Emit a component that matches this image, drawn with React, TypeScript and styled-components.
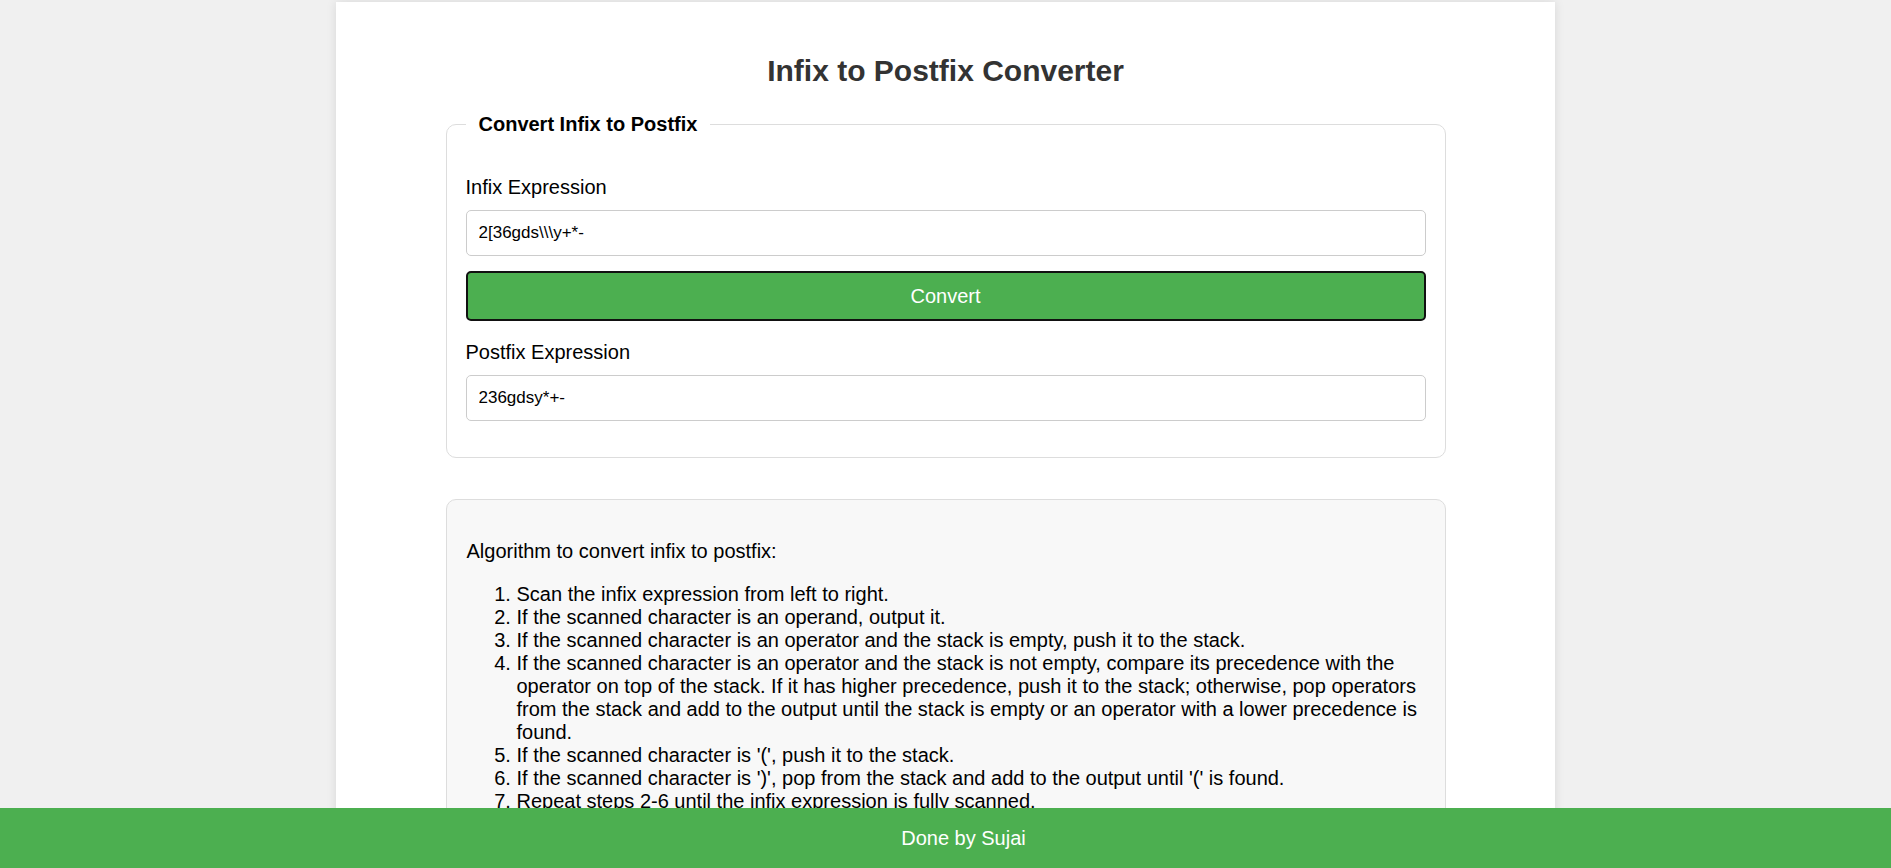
import React from "react";
import styled, { createGlobalStyle } from "styled-components";

const GlobalStyle = createGlobalStyle`
  html {
    scrollbar-width: none;
  }
  html::-webkit-scrollbar {
    display: none;
  }
  body {
    margin: 0;
    background: #f0f0f0;
    font-family: "Liberation Sans", Arial, sans-serif;
    color: #000;
  }
  * {
    box-sizing: border-box;
  }
`;

const Page = styled.div`
  width: 1219px;
  margin: 2px auto 0;
  padding: 20px 0 120px;
  background: #fff;
  box-shadow: 0 0 10px rgba(0, 0, 0, 0.1);
  min-height: 100vh;
`;

const Title = styled.h1`
  margin: 32px 0 25px;
  font-size: 30px;
  line-height: 34px;
  font-weight: bold;
  color: #333;
  text-align: center;
`;

const Card = styled.fieldset`
  width: 1000px;
  margin: 0 auto;
  padding: 20px 19px 36px;
  border: 1px solid #ddd;
  border-radius: 10px;
`;

const Legend = styled.legend`
  padding: 0 13px;
  font-size: 20px;
  line-height: 23px;
  font-weight: bold;
`;

const Label = styled.label`
  display: block;
  margin: 20px 0 11px;
  font-size: 20px;
  line-height: 23px;
`;

const TextInput = styled.input`
  display: block;
  width: 100%;
  height: 46px;
  padding: 0 12px;
  border: 1px solid #ccc;
  border-radius: 5px;
  font-family: "Liberation Sans", Arial, sans-serif;
  font-size: 17px;
  color: #000;
  background: #fff;
  outline: none;
`;

const ConvertButton = styled.button`
  display: block;
  width: 100%;
  height: 50px;
  margin-top: 15px;
  border: 2px solid #111;
  border-radius: 5px;
  background: #4caf50;
  color: #fff;
  font-family: "Liberation Sans", Arial, sans-serif;
  font-size: 20px;
  cursor: pointer;
`;

const InfoBox = styled.div`
  width: 1000px;
  margin: 41px auto 0;
  padding: 20px;
  background: #f8f8f8;
  border: 1px solid #ddd;
  border-radius: 10px;
  font-size: 20px;
  line-height: 23px;
`;

const Intro = styled.p`
  margin: 20px 0;
`;

const Steps = styled.ol`
  margin: 20px 0;
  padding-left: 50px;
`;

const Footer = styled.footer`
  position: fixed;
  left: 0;
  right: 0;
  bottom: 0;
  height: 60px;
  padding-left: 36px;
  background: #4caf50;
  color: #fff;
  font-size: 20px;
  line-height: 60px;
  text-align: center;
`;

const steps = [
  "Scan the infix expression from left to right.",
  "If the scanned character is an operand, output it.",
  "If the scanned character is an operator and the stack is empty, push it to the stack.",
  "If the scanned character is an operator and the stack is not empty, compare its precedence with the operator on top of the stack. If it has higher precedence, push it to the stack; otherwise, pop operators from the stack and add to the output until the stack is empty or an operator with a lower precedence is found.",
  "If the scanned character is '(', push it to the stack.",
  "If the scanned character is ')', pop from the stack and add to the output until '(' is found.",
  "Repeat steps 2-6 until the infix expression is fully scanned.",
  "Pop and output all remaining operators from the stack.",
];

export default function App() {
  const [infix, setInfix] = React.useState("2[36gds\\\\\\y+*-");
  const [postfix, setPostfix] = React.useState("236gdsy*+-");

  return (
    <>
      <GlobalStyle />
      <Page>
        <Title>Infix to Postfix Converter</Title>
        <Card>
          <Legend>Convert Infix to Postfix</Legend>
          <Label htmlFor="infix">Infix Expression</Label>
          <TextInput
            id="infix"
            value={infix}
            onChange={(e) => setInfix(e.target.value)}
          />
          <ConvertButton type="button" onClick={() => setPostfix(postfix)}>
            Convert
          </ConvertButton>
          <Label htmlFor="postfix">Postfix Expression</Label>
          <TextInput id="postfix" value={postfix} readOnly />
        </Card>
        <InfoBox>
          <Intro>Algorithm to convert infix to postfix:</Intro>
          <Steps>
            {steps.map((s) => (
              <li key={s}>{s}</li>
            ))}
          </Steps>
        </InfoBox>
      </Page>
      <Footer>Done by Sujai</Footer>
    </>
  );
}
